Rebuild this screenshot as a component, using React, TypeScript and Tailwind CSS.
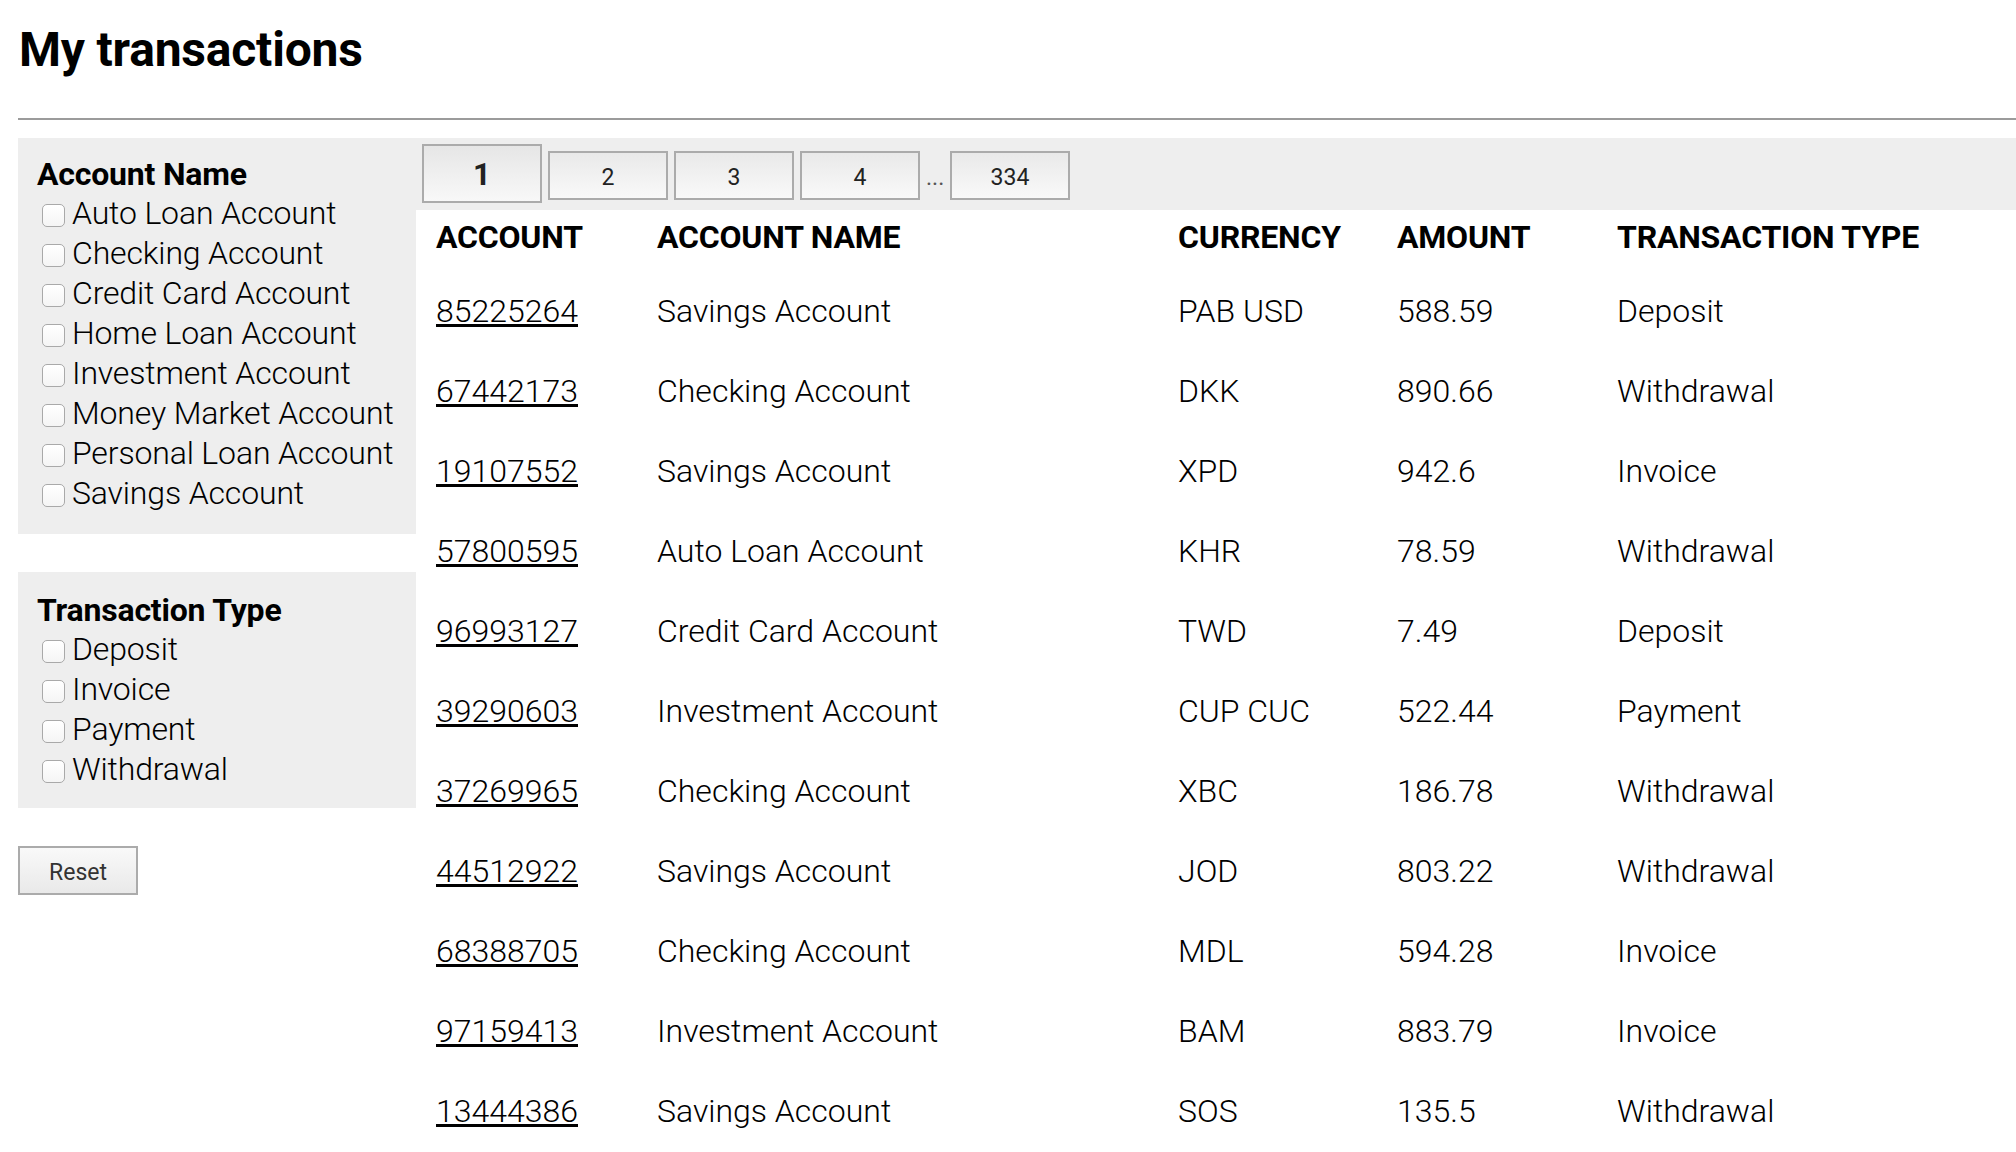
import React from "react";

const accountNames = [
  "Auto Loan Account",
  "Checking Account",
  "Credit Card Account",
  "Home Loan Account",
  "Investment Account",
  "Money Market Account",
  "Personal Loan Account",
  "Savings Account",
];

const txTypes = ["Deposit", "Invoice", "Payment", "Withdrawal"];

const rows: [string, string, string, string, string][] = [
  ["85225264", "Savings Account", "PAB USD", "588.59", "Deposit"],
  ["67442173", "Checking Account", "DKK", "890.66", "Withdrawal"],
  ["19107552", "Savings Account", "XPD", "942.6", "Invoice"],
  ["57800595", "Auto Loan Account", "KHR", "78.59", "Withdrawal"],
  ["96993127", "Credit Card Account", "TWD", "7.49", "Deposit"],
  ["39290603", "Investment Account", "CUP CUC", "522.44", "Payment"],
  ["37269965", "Checking Account", "XBC", "186.78", "Withdrawal"],
  ["44512922", "Savings Account", "JOD", "803.22", "Withdrawal"],
  ["68388705", "Checking Account", "MDL", "594.28", "Invoice"],
  ["97159413", "Investment Account", "BAM", "883.79", "Invoice"],
  ["13444386", "Savings Account", "SOS", "135.5", "Withdrawal"],
];

function CheckItem({ label }: { label: string }) {
  return (
    <label className="flex items-center text-[32px] font-light leading-[40px] text-black whitespace-nowrap">
      <input
        type="checkbox"
        className="appearance-none ml-[4px] mr-[7px] mt-[5px] w-[23px] h-[23px] rounded-[5px] border border-[#a9a9a9] bg-gradient-to-b from-white to-[#f5f5f5] shrink-0"
      />
      <span className="tracking-[-0.15px]">{label}</span>
    </label>
  );
}

function PageButton({ label }: { label: string }) {
  return (
    <button className="box-border w-[120px] h-[49px] border-2 border-[#ababab] bg-gradient-to-b from-[#e9e9e9] to-[#f9f9f9] pt-[11px] text-[23px] leading-[27px] text-[#222] flex justify-center items-start">
      {label}
    </button>
  );
}

export default function App() {
  return (
    <div
      className="w-[2016px] h-[1152px] overflow-hidden bg-white text-black pl-[18px]"
      style={{ fontFamily: "Roboto, 'Liberation Sans', sans-serif" }}
    >
      <h1 className="pt-[22px] text-[48px] leading-[56px] font-bold pl-[1px] tracking-[-0.2px]">My transactions</h1>
      <div className="mt-[40px] border-t-2 border-[#9b9b9b]" />
      <div className="mt-[18px] flex">
        {/* Sidebar */}
        <aside className="w-[398px] shrink-0">
          <div className="bg-[#eeeeee] pl-[19px] pr-[20px] pt-[16px] pb-[20px]">
            <div className="text-[32px] font-bold leading-[40px] tracking-[-0.2px]">Account Name</div>
            <div className="pl-[1px] -mt-[1px] pb-[1px]">
              {accountNames.map((n) => (
                <CheckItem key={n} label={n} />
              ))}
            </div>
          </div>
          <div className="mt-[38px] bg-[#eeeeee] pl-[19px] pr-[20px] pt-[18px] pb-[18px]">
            <div className="text-[32px] font-bold leading-[40px] tracking-[-0.2px]">Transaction Type</div>
            <div className="pl-[1px] -mt-[1px] pb-[1px]">
              {txTypes.map((n) => (
                <CheckItem key={n} label={n} />
              ))}
            </div>
          </div>
          <button className="mt-[38px] box-border w-[120px] h-[49px] border-2 border-[#ababab] bg-gradient-to-b from-[#f9f9f9] to-[#e9e9e9] pt-[3px] text-[23px] leading-[27px] text-[#333] flex items-center justify-center">
            Reset
          </button>
        </aside>

        {/* Main */}
        <main className="flex-1 min-w-0">
          <div className="h-[72px] bg-[#eeeeee] pl-[6px] pt-[6px] flex items-baseline gap-[6px]">
            <button className="box-border w-[120px] h-[59px] border-2 border-[#ababab] bg-gradient-to-b from-[#e6e6e6] to-[#f8f8f8] pt-[11px] text-[31px] leading-[36px] font-bold text-[#222] flex justify-center items-start">
              1
            </button>
            <PageButton label="2" />
            <PageButton label="3" />
            <PageButton label="4" />
            <span className="w-[18px] text-center text-[23px] leading-[27px] text-[#555]">...</span>
            <PageButton label="334" />
          </div>

          <div className="grid grid-cols-[221px_521px_219px_220px_1fr]">
            {["ACCOUNT", "ACCOUNT NAME", "CURRENCY", "AMOUNT", "TRANSACTION TYPE"].map((h) => (
              <div
                key={h}
                className="pl-[20px] pt-[7px] pb-[14px] text-[32px] leading-[40px] font-bold whitespace-nowrap tracking-[-0.2px]"
              >
                {h}
              </div>
            ))}
            {rows.map((r) => (
              <React.Fragment key={r[0]}>
                <div className="pl-[20px] py-[20px] text-[32px] leading-[40px] font-light">
                  <a href="#" className="underline text-black">
                    {r[0]}
                  </a>
                </div>
                <div className="pl-[20px] py-[20px] text-[32px] leading-[40px] font-light whitespace-nowrap">{r[1]}</div>
                <div className="pl-[20px] py-[20px] text-[32px] leading-[40px] font-light whitespace-nowrap">{r[2]}</div>
                <div className="pl-[20px] py-[20px] text-[32px] leading-[40px] font-light">{r[3]}</div>
                <div className="pl-[20px] py-[20px] text-[32px] leading-[40px] font-light">{r[4]}</div>
              </React.Fragment>
            ))}
          </div>
        </main>
      </div>
    </div>
  );
}
